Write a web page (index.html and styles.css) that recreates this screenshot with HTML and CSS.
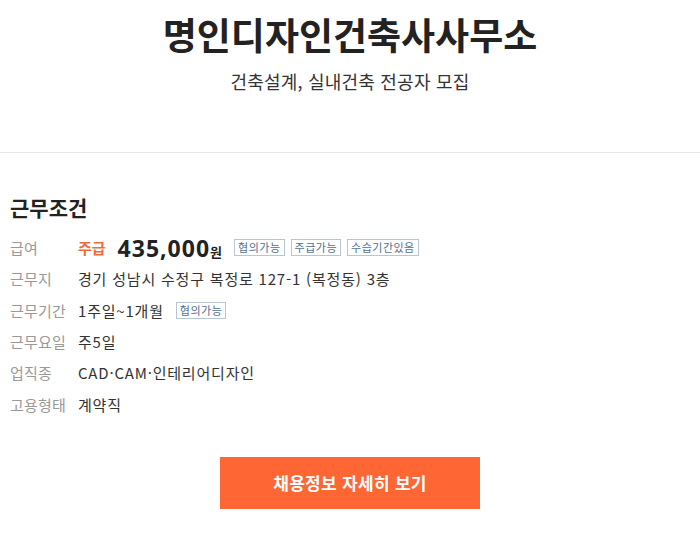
FILE: index.html
```html
<!DOCTYPE html>
<html lang="ko">
<head>
<meta charset="utf-8">
<link rel="stylesheet" href="styles.css">
</head>
<body>
<header class="hero">
  <h1 class="company">명인디자인건축사사무소</h1>
  <p class="subtitle">건축설계, 실내건축 전공자 모집</p>
</header>
<section class="conditions">
  <h2 class="section-title">근무조건</h2>
  <dl class="rows">
    <div class="row">
      <dt>급여</dt>
      <dd class="pay">
        <span class="pay-type">주급</span>
        <span class="amount">435,000<small>원</small></span>
        <span class="tags"><span class="tag">협의가능</span><span class="tag">주급가능</span><span class="tag">수습기간있음</span></span>
      </dd>
    </div>
    <div class="row">
      <dt>근무지</dt>
      <dd>경기 성남시 수정구 복정로 127-1 (복정동) 3층</dd>
    </div>
    <div class="row">
      <dt>근무기간</dt>
      <dd>1주일~1개월 <span class="tags gap"><span class="tag">협의가능</span></span></dd>
    </div>
    <div class="row">
      <dt>근무요일</dt>
      <dd>주5일</dd>
    </div>
    <div class="row">
      <dt>업직종</dt>
      <dd>CAD·CAM·인테리어디자인</dd>
    </div>
    <div class="row">
      <dt>고용형태</dt>
      <dd>계약직</dd>
    </div>
  </dl>
  <div class="actions">
    <a class="btn" href="#">채용정보 자세히 보기</a>
  </div>
</section>
</body>
</html>
```

FILE: styles.css
```css
* { box-sizing: border-box; }
html, body { margin: 0; padding: 0; background: #fff; }
body {
  font-family: "Noto Sans CJK KR", "Noto Sans", sans-serif;
  color: #222;
  width: 700px;
}
.hero {
  text-align: center;
  padding-top: 8px;
  height: 153px;
  border-bottom: 1px solid #e8e8e8;
}
.company {
  margin: 0;
  font-size: 37px;
  font-weight: 700;
  line-height: 52px;
  color: #222;
}
.subtitle {
  margin: 9px 0 0;
  font-size: 18px;
  letter-spacing: 0.2px;
  line-height: 24px;
  color: #333;
}
.conditions {
  padding: 39px 10px 0;
}
.section-title {
  margin: 0 0 10px;
  font-size: 21px;
  font-weight: 700;
  line-height: 30px;
  color: #222;
}
.rows { margin: 0; }
.row {
  display: flex;
  align-items: center;
  height: 31.3px;
}
.row dt {
  width: 68px;
  flex: none;
  font-size: 15px;
  color: #999;
  letter-spacing: 0.2px;
}
.row dd {
  margin: 0;
  font-size: 15px;
  letter-spacing: 0.8px;
  color: #333;
  display: flex;
  align-items: center;
}
.pay-type {
  color: #f06a3a;
  font-weight: 700;
  font-size: 15px;
  letter-spacing: 0;
  margin-right: 12px;
}
.amount {
  font-family: "Open Sans", "Noto Sans", sans-serif;
  font-size: 23px;
  font-weight: 700;
  letter-spacing: 1px;
  color: #222;
  margin-right: 12px;
  display: flex;
  align-items: baseline;
}
.amount small {
  font-family: "Noto Sans CJK KR", sans-serif;
  font-size: 13px;
  letter-spacing: 0;
  margin-left: 0;
}
.tags { display: flex; gap: 6px; letter-spacing: 0.5px; }
.tags.gap { margin-left: 12px; }
.tag {
  font-size: 11px;
  line-height: 15px;
  padding: 0 3px;
  border: 1px solid #b9c6d2;
  color: #4f7090;
}
.actions {
  display: flex;
  justify-content: center;
  margin-top: 37px;
}
.btn {
  display: flex;
  align-items: center;
  justify-content: center;
  width: 260px;
  height: 52px;
  background: #fe6634;
  color: #fff;
  font-size: 17px;
  letter-spacing: 0.3px;
  font-weight: 700;
  text-decoration: none;
}
```
